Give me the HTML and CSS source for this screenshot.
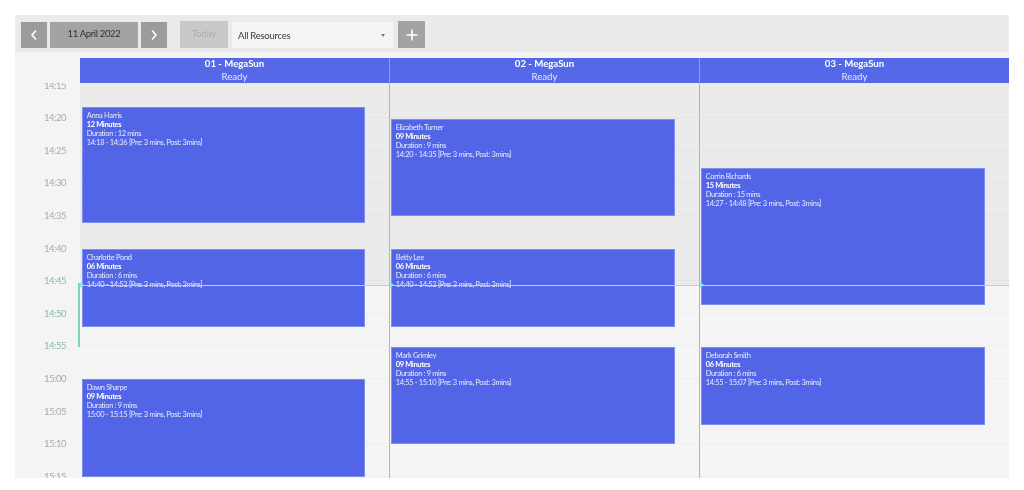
FILE: index.html
```html
<!DOCTYPE html>
<html lang="en">
<head>
<meta charset="utf-8">
<title>Schedule</title>
<link rel="stylesheet" href="styles.css">
</head>
<body>
<div class="app">
  <div class="toolbar">
    <div class="date-nav">
      <button class="btn btn-icon" aria-label="Previous"><svg viewBox="0 0 10 14" width="10" height="14"><path d="M7 2.5 3 7l4 4.5" fill="none" stroke="#fff" stroke-width="1.6"/></svg></button>
      <button class="btn btn-date">11 April 2022</button>
      <button class="btn btn-icon" aria-label="Next"><svg viewBox="0 0 10 14" width="10" height="14"><path d="M3 2.5 7 7l-4 4.5" fill="none" stroke="#fff" stroke-width="1.6"/></svg></button>
    </div>
    <button class="btn btn-today">Today</button>
    <div class="select"><span>All Resources</span><i class="caret"></i></div>
    <button class="btn btn-add" aria-label="Add"><svg viewBox="0 0 12 12" width="12" height="12"><path d="M6 .5v11M.5 6h11" fill="none" stroke="#fff" stroke-width="1.6"/></svg></button>
  </div>
  <div class="head">
    <div class="head-col"><b>01 - MegaSun</b><span>Ready</span></div>
    <div class="head-col"><b>02 - MegaSun</b><span>Ready</span></div>
    <div class="head-col"><b>03 - MegaSun</b><span>Ready</span></div>
  </div>
  <div class="body">
    <div class="axis">
      <div class="tick">14:15</div>
      <div class="tick">14:20</div>
      <div class="tick">14:25</div>
      <div class="tick">14:30</div>
      <div class="tick">14:35</div>
      <div class="tick">14:40</div>
      <div class="tick tick-now">14:45</div>
      <div class="tick tick-now">14:50</div>
      <div class="tick tick-now">14:55</div>
      <div class="tick">15:00</div>
      <div class="tick">15:05</div>
      <div class="tick">15:10</div>
      <div class="tick">15:15</div>
    </div>
    <div class="col">
      <div class="event" style="top:24px;height:116px"><p>Anna Harris</p><p class="strong">12 Minutes</p><p>Duration : 12 mins</p><p>14:18 - 14:36 [Pre: 3 mins, Post: 3mins]</p></div>
      <div class="event" style="top:166px;height:78px"><p>Charlotte Pond</p><p class="strong">06 Minutes</p><p>Duration : 6 mins</p><p>14:40 - 14:52 [Pre: 3 mins, Post: 3mins]</p></div>
      <div class="event" style="top:296px;height:98px"><p>Dawn Sharpe</p><p class="strong">09 Minutes</p><p>Duration : 9 mins</p><p>15:00 - 15:15 [Pre: 3 mins, Post: 3mins]</p></div>
      <i class="now-marker"></i>
      <i class="now-arrow"></i>
    </div>
    <div class="col col-sep">
      <div class="event" style="top:36px;height:97px"><p>Elizabeth Turner</p><p class="strong">09 Minutes</p><p>Duration : 9 mins</p><p>14:20 - 14:35 [Pre: 3 mins, Post: 3mins]</p></div>
      <div class="event" style="top:166px;height:78px"><p>Betty Lee</p><p class="strong">06 Minutes</p><p>Duration : 6 mins</p><p>14:40 - 14:52 [Pre: 3 mins, Post: 3mins]</p></div>
      <div class="event" style="top:264px;height:97px"><p>Mark Grimley</p><p class="strong">09 Minutes</p><p>Duration : 9 mins</p><p>14:55 - 15:10 [Pre: 3 mins, Post: 3mins]</p></div>
      <i class="now-arrow"></i>
    </div>
    <div class="col col-sep">
      <div class="event" style="top:85px;height:137px"><p>Corrin Richards</p><p class="strong">15 Minutes</p><p>Duration : 15 mins</p><p>14:27 - 14:48 [Pre: 3 mins, Post: 3mins]</p></div>
      <div class="event" style="top:264px;height:78px"><p>Deborah Smith</p><p class="strong">06 Minutes</p><p>Duration : 6 mins</p><p>14:55 - 15:07 [Pre: 3 mins, Post: 3mins]</p></div>
      <i class="now-arrow"></i>
    </div>
    <i class="now-line"></i>
  </div>
</div>
</body>
</html>
```
FILE: styles.css
```css
* { box-sizing: border-box; }
html, body { margin: 0; padding: 0; background: #fff; }
body { font-family: Lato, "Open Sans", sans-serif; height: 490px; overflow: hidden; padding: 15px 15px 12px; }
.app { width: 994px; height: 463px; display: flex; flex-direction: column; overflow: hidden; background: #f4f4f4; filter: blur(.3px); }

.toolbar { height: 37px; flex: none; background: #ebebeb; display: flex; align-items: flex-start; padding: 6px 0 0 6px; }
.date-nav { display: flex; gap: 3px; margin-top: 1px; margin-right: 13px; }
.btn { border: 0; padding: 0; margin: 0; font-family: inherit; display: flex; align-items: center; justify-content: center; }
.btn-icon { width: 26px; height: 26px; background: #9c9c9c; }
.btn-date { width: 88px; height: 26px; background: #a3a3a3; color: #333; font-size: 9.5px; letter-spacing: -.35px; padding-bottom: 3px; }
.btn-today { width: 48px; height: 27px; background: #c9c9c9; color: #adadad; font-size: 9.5px; letter-spacing: -.1px; padding-bottom: 2px; }
.select { width: 161px; height: 26px; margin: 1px 5px 0 4px; background: #f5f5f5; color: #3a3a3a; font-size: 9.5px; letter-spacing: -.25px; display: flex; align-items: center; justify-content: space-between; padding: 0 8px 0 6px; }
.caret { width: 0; height: 0; border: 2.5px solid transparent; border-top: 3px solid #777; border-bottom: 0; }
.btn-add { width: 27px; height: 27px; background: #a3a3a3; }

.head { height: 31px; flex: none; padding: 6px 0 0 65px; display: flex; background: #f4f4f4; }
.head-col { flex: 1 1 0; background: #5468e8; color: #fff; display: flex; flex-direction: column; align-items: center; font-size: 9.6px; line-height: 12.5px; border-left: 1px solid #8d9bf0; }
.head-col:first-child { border-left: 0; }
.head-col b { font-weight: 700; }
.head-col span { color: #e3e7fb; }

.body { flex: 1; display: flex; position: relative; overflow: hidden; }
.axis { width: 65px; flex: none; margin-top: -13.3px; }
.tick { height: 32.6px; line-height: 32.6px; color: #a9a9a9; font-size: 9.5px; text-align: right; padding-right: 14px; letter-spacing: -.5px; }
.tick-now { color: #8cb8aa; }

.col { flex: 1 1 0; position: relative; background-image:
    repeating-linear-gradient(to bottom, transparent 0 1.6px, rgba(0,0,0,.025) 1.6px 2.4px, transparent 2.4px 32.6px),
    linear-gradient(to bottom, #ebebeb 202px, #f5f5f5 202px); }
.col-sep { border-left: 1px solid #b4b4b4; }
.col-sep .event { left: 1px; width: 283.7px; }

.event { position: absolute; left: 2px; width: 283px; background: #5265e6; border: 1px solid #7d8df0; padding: 2.5px 3.7px; color: #e9ecfc; font-size: 7.5px; letter-spacing: -.35px; line-height: 9.3px; overflow: hidden; }
.event p { margin: 0; white-space: nowrap; }
.strong { font-weight: 700; color: #fff; }

.now-line { position: absolute; left: 65px; right: 0; top: 202px; height: 1px; background: #86e8e8; }
.now-marker { position: absolute; left: -2px; top: 200px; width: 2px; height: 64px; background: #83d0bf; }
.now-arrow { position: absolute; left: 0; top: 199px; width: 0; height: 0; border-left: 4px solid #86e8e8; border-top: 3px solid transparent; border-bottom: 3px solid transparent; z-index: 2; }
```
